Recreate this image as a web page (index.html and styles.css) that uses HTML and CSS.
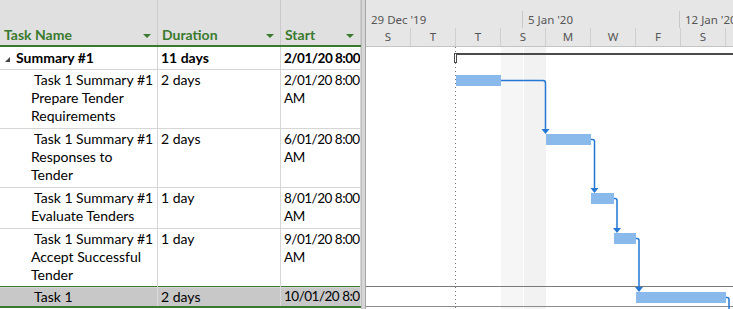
FILE: index.html
```html
<!DOCTYPE html>
<html lang="en">
<head>
  <meta charset="UTF-8" />
  <title>Gantt Chart</title>
  <link rel="stylesheet" href="styles.css">
</head>
<body>

  <div class="view">
    <!-- TASK SHEET -->
    <div class="sheet">
      <div class="row head">
        <div class="cell">Task Name<span class="drop"></span></div>
        <div class="cell">Duration<span class="drop"></span></div>
        <div class="cell">Start<span class="drop"></span></div>
      </div>

      <div class="row summary">
        <div class="cell name"><span class="toggle"></span>Summary #1</div>
        <div class="cell">11 days</div>
        <div class="cell date">2/01/20&nbsp;8:00 AM</div>
      </div>

      <div class="row">
        <div class="cell name task">Task 1 Summary #1 Prepare Tender Requirements</div>
        <div class="cell">2 days</div>
        <div class="cell date">2/01/20&nbsp;8:00 AM</div>
      </div>

      <div class="row">
        <div class="cell name task">Task 1 Summary #1 Responses to Tender</div>
        <div class="cell">2 days</div>
        <div class="cell date">6/01/20&nbsp;8:00 AM</div>
      </div>

      <div class="row">
        <div class="cell name task">Task 1 Summary #1 Evaluate Tenders</div>
        <div class="cell">1 day</div>
        <div class="cell date">8/01/20&nbsp;8:00 AM</div>
      </div>

      <div class="row">
        <div class="cell name task">Task 1 Summary #1 Accept Successful Tender</div>
        <div class="cell">1 day</div>
        <div class="cell date">9/01/20&nbsp;8:00 AM</div>
      </div>

      <div class="row selected">
        <div class="cell name task">Task 1</div>
        <div class="cell">2 days</div>
        <div class="cell date">10/01/20&nbsp;8:00 AM</div>
      </div>
    </div>

    <div class="splitter"></div>

    <!-- GANTT CHART -->
    <div class="chart">
      <div class="timescale">
        <div class="tier weeks">
          <div class="week">29 Dec '19</div>
          <div class="week">5 Jan '20</div>
          <div class="week">12 Jan '20</div>
        </div>
        <div class="tier days">
          <div class="day">S</div>
          <div class="day">T</div>
          <div class="day">T</div>
          <div class="day">S</div>
          <div class="day">M</div>
          <div class="day">W</div>
          <div class="day">F</div>
          <div class="day">S</div>
        </div>
      </div>

      <svg class="chart-body" width="367" height="262" viewBox="366 47 367 262">
        <!-- weekend -->
        <rect x="501" y="47" width="22" height="262" fill="#f6f6f6" />
        <rect x="524" y="47" width="22" height="262" fill="#f2f2f2" />

        <!-- project start -->
        <line x1="455.5" y1="47" x2="455.5" y2="309" stroke="#777" stroke-dasharray="1 3" />

        <!-- selected row -->
        <line x1="366" y1="286.5" x2="733" y2="286.5" stroke="#7a7a7a" />
        <line x1="366" y1="306.5" x2="733" y2="306.5" stroke="#8c8c8c" />

        <!-- summary bar -->
        <rect x="455" y="53" width="278" height="2" fill="#4a4a4a" />
        <rect x="454.5" y="53.5" width="2" height="9" fill="#fff" stroke="#4a4a4a" />

        <!-- tasks -->
        <g fill="#8ab9ec">
          <rect x="456" y="75" width="45" height="11" />
          <rect x="546" y="134" width="45" height="11" />
          <rect x="591" y="193" width="23" height="11" />
          <rect x="614" y="233" width="22" height="11" />
          <rect x="636" y="292" width="90" height="11" />
        </g>

        <!-- links -->
        <g fill="none" stroke="#2477d2" stroke-width="1.5">
          <path d="M501 80.5 H543 Q545.5 80.5 545.5 83 V130" />
          <path d="M591 139.5 H592.5 Q594.5 139.5 594.5 141.5 V189" />
          <path d="M614 198.5 H615 Q617 198.5 617 200.5 V229" />
          <path d="M636 238.5 H637 Q639 238.5 639 240.5 V288" />
          <path d="M726 297.5 H727 Q729 297.5 729 299.5 V309" />
        </g>
        <g fill="#2477d2">
          <path d="M541.5 129 H549.5 L545.5 134 Z" />
          <path d="M590.5 188 H598.5 L594.5 193 Z" />
          <path d="M613 228 H621 L617 233 Z" />
          <path d="M635 287 H643 L639 292 Z" />
        </g>
      </svg>
    </div>
  </div>

</body>
</html>
```

FILE: styles.css
```css
body {
  margin: 0;
  background: #fff;
  font-family: Lato, 'Liberation Sans', sans-serif;
  font-size: 14px;
  color: #000;
}

.view {
  display: flex;
  width: 733px;
  height: 309px;
  overflow: hidden;
}

/* TASK SHEET */
.sheet {
  width: 361px;
  flex: none;
}

.row {
  display: grid;
  grid-template-columns: 158px 123px 80px;
}

.cell {
  box-sizing: border-box;
  padding: 1px 3px 3px 3px;
  line-height: 18px;
  border-right: 1px solid #d6d6d6;
  border-bottom: 1px solid #d6d6d6;
}

.date {
  padding-right: 0;
  font-size: 13.5px;
  letter-spacing: -0.5px;
  overflow: hidden;
}

.row.head {
  height: 47px;
  background: #e0e0e0;
  border-bottom: 2px solid #3a7a2e;
  box-sizing: border-box;
}

.head .cell {
  display: flex;
  align-items: flex-end;
  padding: 0 0 1px 4px;
  line-height: 19px;
  font-weight: bold;
  color: #3a7a2e;
  border-bottom: none;
  border-right-color: #cacaca;
}

.drop {
  margin: 0 6px 6px auto;
  border-left: 4px solid transparent;
  border-right: 4px solid transparent;
  border-top: 4px solid #3a7a2e;
}

.summary .cell {
  height: 23px;
  padding-top: 2px;
  padding-bottom: 0;
  font-weight: bold;
  overflow: hidden;
}

.name {
  padding-left: 16px;
}

.toggle {
  display: inline-block;
  margin: 0 6px 1px -11px;
  border-left: 5px solid transparent;
  border-bottom: 5px solid #444;
}

.task {
  padding-left: 31px;
  text-indent: 3px;
}

.selected {
  margin-top: -2px;
  background: #c8c8c8;
  border-top: 1px solid #3a7a2e;
  border-bottom: 2px solid #3a7a2e;
}

.selected .cell {
  height: 19px;
  padding-top: 0;
  padding-bottom: 0;
  line-height: 19px;
  border-bottom: none;
  border-right-color: #dadada;
  white-space: nowrap;
  overflow: hidden;
}

.splitter {
  width: 3px;
  flex: none;
  background: #d6d6d6;
  border-left: 1px solid #bdbdbd;
  border-right: 1px solid #a6a6a6;
}

/* GANTT CHART */
.chart {
  flex: 1;
  min-width: 0;
}

.timescale {
  height: 47px;
  box-sizing: border-box;
  padding-top: 11px;
  background: #e6e6e6;
  border-bottom: 1px solid #c4c4c4;
  font-family: 'Noto Sans', sans-serif;
  font-size: 11.5px;
  color: #555;
  white-space: nowrap;
}

.tier {
  display: flex;
}

.weeks {
  height: 17px;
  line-height: 17px;
}

.week {
  flex: none;
  width: 157px;
  padding-left: 5px;
  box-sizing: border-box;
  border-right: 1px solid #c8c8c8;
}

.days {
  height: 18px;
  line-height: 17px;
}

.day {
  flex: none;
  width: 45px;
  box-sizing: border-box;
  text-align: center;
  border-right: 1px solid #cfcfcf;
}

.chart-body {
  display: block;
}
```
